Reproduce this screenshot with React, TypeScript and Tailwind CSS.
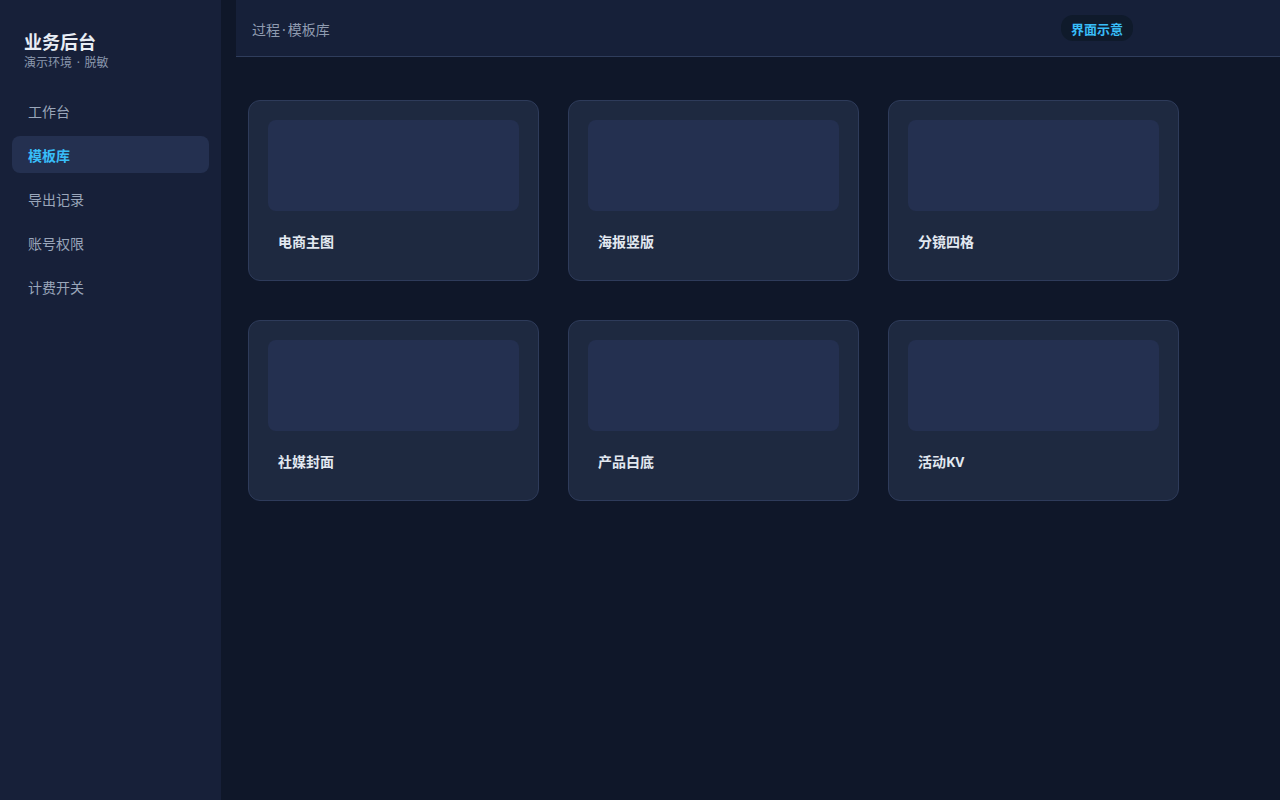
import React from "react";

const nav = ["工作台", "模板库", "导出记录", "账号权限", "计费开关"];
const cards = ["电商主图", "海报竖版", "分镜四格", "社媒封面", "产品白底", "活动KV"];

export default function App() {
  return (
    <div
      className="flex h-[800px] w-[1280px] bg-[#0f1729] overflow-hidden"
      style={{ fontFamily: '"Noto Sans", "Noto Sans CJK SC", sans-serif' }}
    >
      <aside className="w-[221px] shrink-0 bg-[#172039] px-3 pt-[30px]">
        <div className="px-3">
          <div className="text-[18px] font-bold leading-[24px] text-[#e8edf5]">业务后台</div>
          <div className="mt-[1px] text-[12px] leading-[16px] text-[#8a97ad]">
            演示环境<span className="px-[1.5px]"> · </span>脱敏
          </div>
        </div>
        <nav className="mt-[21px] flex flex-col gap-[7px]">
          {nav.map((n) => (
            <div
              key={n}
              className={
                n === "模板库"
                  ? "h-[37px] rounded-[8px] bg-[#243050] px-4 pt-[1px] flex items-center text-[14px] font-bold text-[#38bdf8]"
                  : "h-[37px] rounded-[8px] px-4 pt-[1px] flex items-center text-[14px] text-[#9aa6ba]"
              }
            >
              {n}
            </div>
          ))}
        </nav>
      </aside>
      <main className="flex-1 pl-[15px]">
        <header className="h-[57px] bg-[#162039] border-b border-[#2f3d5c] flex items-center pl-4 pr-[147px]">
          <div className="pt-[2px] text-[14px] text-[#8f9bb0]">
            过程<span className="px-[2px]">·</span>模板库
          </div>
          <div className="ml-auto h-[26px] rounded-[12px] bg-[#0f1a2b] px-[10px] pt-[3px] flex items-center text-[13px] font-bold text-[#38bdf8]">
            界面示意
          </div>
        </header>
        <div className="pl-3 pt-[43px] grid grid-cols-[291px_291px_291px] gap-x-[29px] gap-y-[39px]">
          {cards.map((c) => (
            <div
              key={c}
              className="h-[181px] rounded-[12px] border border-[#2e3b5a] bg-[#1e2940] p-[19px]"
            >
              <div className="h-[91px] rounded-[8px] bg-[#243050]" />
              <div className="mt-[21px] pl-[10px] text-[14px] leading-[20px] font-bold text-[#e2e8f0]">{c}</div>
            </div>
          ))}
        </div>
      </main>
    </div>
  );
}
